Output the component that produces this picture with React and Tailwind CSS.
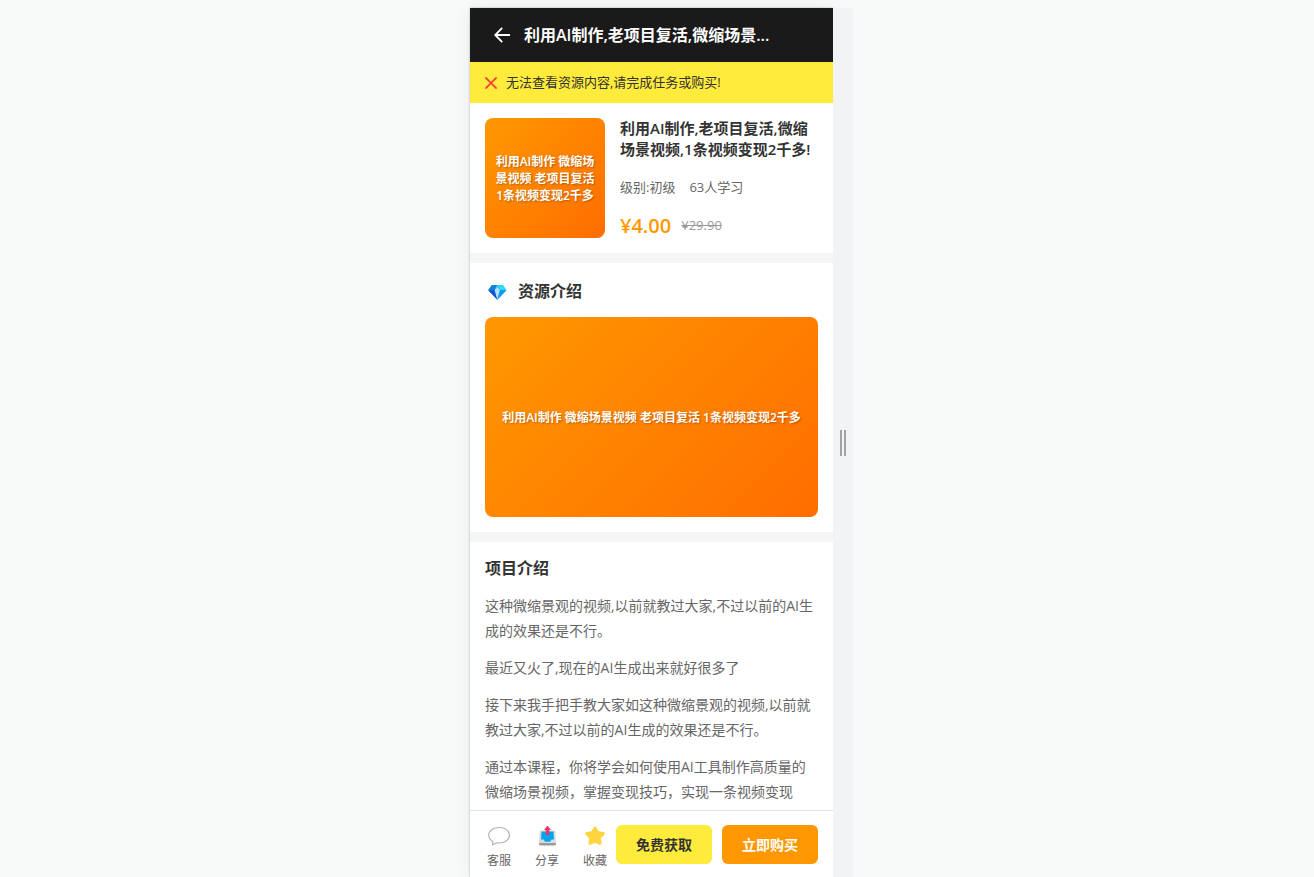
import React from 'react';

const TITLE = '利用AI制作,老项目复活,微缩场景视频,1条视频变现2千多!';
const SHORT_TITLE = '利用AI制作,老项目复活,微缩场景...';
const COVER_TEXT = '利用AI制作 微缩场景视频 老项目复活 1条视频变现2千多';

const paragraphs = [
  '这种微缩景观的视频,以前就教过大家,不过以前的AI生成的效果还是不行。',
  '最近又火了,现在的AI生成出来就好很多了',
  '接下来我手把手教大家如这种微缩景观的视频,以前就教过大家,不过以前的AI生成的效果还是不行。',
  '通过本课程，你将学会如何使用AI工具制作高质量的微缩场景视频，掌握变现技巧，实现一条视频变现',
];

const BackIcon = () => (
  <svg className="w-4 h-4" viewBox="0 0 16 16" fill="none" stroke="currentColor" strokeWidth="1.8">
    <path d="M8.2 0.8L1.2 8l7 7.2M1.4 8H16" />
  </svg>
);

const CrossIcon = () => (
  <svg className="w-3 h-3 shrink-0" viewBox="0 0 12 12" fill="none" stroke="#f44336" strokeWidth="1.8">
    <path d="M0.4 0.4l11.2 11.2M11.6 0.4L0.4 11.6" />
  </svg>
);

const DiamondIcon = () => (
  <svg className="w-6 h-5 shrink-0" viewBox="0 0 24 20">
    <path d="M6.7 3.2h11.1L21.3 8.3 12.3 17.8 3.3 8.3z" fill="#0078d4" />
    <path d="M6.7 3.2h5.6L9.3 8.3h-6z" fill="#0b84d8" />
    <path d="M12.3 3.2h5.5l3.5 5.1h-6z" fill="#26e0f7" />
    <path d="M9.3 8.3l3-5.1 3 5.1z" fill="#4cc9f5" />
    <path d="M3.3 8.3h6l3 9.5z" fill="#1453d8" />
    <path d="M15.3 8.3h6l-9 9.500z" fill="#0a9df2" />
    <path d="M9.7 8.3l2.600-3 2.600 3-2.600 9.500z" fill="#b3e0ff" />
  </svg>
);

const ChatIcon = () => (
  <svg className="w-[22px] h-[22px]" viewBox="1 1 22 22" fill="#fff" stroke="#b0b0b0" strokeWidth="1.1">
    <path d="M12.2 3.500C6.400 3.500 1.700 6.800 1.700 11.100c0 2.800 1.600 5 4.200 6.500l-.4 3.100 4-1.900c.9.150 1.800.2 2.700.2 5.800 0 10.300-3.500 10.300-7.900S18 3.500 12.200 3.500z" />
  </svg>
);

const ShareIcon = () => (
  <svg className="w-[22px] h-[22px]" viewBox="1 1 22 22">
    <path d="M4 16.500h17v3.500a1.500 1.500 0 0 1-1.500 1.500h-14A1.500 1.500 0 0 1 4 20z" fill="#9b9b9b" />
    <path d="M5.500 6.500h14a1 1 0 0 1 1 1l.5 9.500v2H4v-2l.5-9.500a1 1 0 0 1 1-1z" fill="#dcdcdc" />
    <path d="M6.500 7.500h12l.5 8h-2.500l-1.500 2.300h-5l-1.500-2.300H6z" fill="#00a6ed" />
    <path d="M12.500 2l2.900 3.700h-1.600v5h-2.600v-5H9.600z" fill="#f8315f" stroke="#f8315f" strokeWidth="0.8" strokeLinejoin="round" />
  </svg>
);

const StarIcon = () => (
  <svg className="w-[22px] h-[22px]" viewBox="1 1 22 22" fill="#fcd53f" stroke="#fcd53f" strokeWidth="3.2" strokeLinejoin="round">
    <path d="M12 4.200l2.400 4.500 5.800.9-4.100 4 .9 5.600-5-2.400-5 2.400.9-5.600-4.100-4 5.800-.9z" />
  </svg>
);

const actions = [
  { label: '客服', Icon: ChatIcon },
  { label: '分享', Icon: ShareIcon },
  { label: '收藏', Icon: StarIcon },
];

const Cover = ({ className }) => (
  <div
    className={`flex items-center justify-center rounded-lg bg-[linear-gradient(135deg,#ff9800,#ff6d00)] p-2 text-center text-xs leading-[17px] font-semibold text-white [text-shadow:1px_1px_2px_rgba(0,0,0,0.3)] ${className}`}
  >
    {COVER_TEXT}
  </div>
);

const Header = () => (
  <header className="flex h-[54px] shrink-0 items-center bg-[#1a1a1a] px-6 text-white">
    <button type="button" aria-label="返回">
      <BackIcon />
    </button>
    <h1 className="ml-3.5 text-base font-semibold whitespace-nowrap">{SHORT_TITLE}</h1>
  </header>
);

const Product = () => (
  <section className="flex gap-[15px] bg-white p-[15px]">
    <Cover className="h-[120px] w-[120px] shrink-0" />
    <div className="flex min-w-0 flex-1 flex-col justify-between">
      <h2 className="text-[15px] leading-[21px] font-semibold text-[#333]">{TITLE}</h2>
      <div className="flex gap-3.5 text-[13px] leading-5 text-[#666]">
        <span>级别:初级</span>
        <span>63人学习</span>
      </div>
      <div className="flex items-center gap-2.5">
        <span className="text-xl leading-6 font-semibold text-[#ff9800]">¥4.00</span>
        <del className="text-[13px] text-[#999]">¥29.90</del>
      </div>
    </div>
  </section>
);

const Footer = () => (
  <footer className="flex shrink-0 items-start justify-between border-t border-[#e0e0e0] bg-white px-[15px] pt-3.5 pb-[5px]">
    <div className="flex gap-5">
      {actions.map(({ label, Icon }) => (
        <button key={label} type="button" className="flex w-7 flex-col items-center gap-[3px] text-xs leading-[22px] text-[#666]">
          <Icon />
          {label}
        </button>
      ))}
    </div>
    <div className="flex gap-2.5">
      <button type="button" className="h-[39px] w-24 rounded-md bg-[#ffeb3b] text-sm font-bold text-[#333]">
        免费获取
      </button>
      <button type="button" className="h-[39px] w-24 rounded-md bg-[#ff9800] text-sm font-bold text-white">
        立即购买
      </button>
    </div>
  </footer>
);

export default function App() {
  return (
    <div className="flex h-screen justify-center overflow-hidden bg-[#f8faf9] pt-2 pl-[9px] font-['Open_Sans','Noto_Sans_CJK_SC',sans-serif]">
      <div className="flex w-full max-w-[363px] flex-col bg-[#f5f5f5] shadow-[0_0_2px_rgba(0,0,0,0.3),0_0_20px_rgba(0,0,0,0.06)]">
        <Header />
        <div className="flex h-[41px] shrink-0 items-center gap-[9px] bg-[#ffeb3b] px-[15px] text-[13px] text-[#333]" role="alert">
          <CrossIcon />
          <span>无法查看资源内容,请完成任务或购买!</span>
        </div>

        <main className="flex min-h-0 flex-1 flex-col gap-2.5 overflow-hidden">
          <Product />

          <section className="bg-white p-[15px]">
            <h2 className="mb-3 flex items-center gap-[9px] text-base leading-[27px] font-bold text-[#333]">
              <DiamondIcon />
              资源介绍
            </h2>
            <Cover className="h-[200px]" />
          </section>

          <section className="flex-1 bg-white p-[15px]">
            <h2 className="mb-3.5 text-base leading-[22px] font-bold text-[#333]">项目介绍</h2>
            <div className="flex flex-col gap-3 text-sm leading-[25px] text-[#666]">
              {paragraphs.map((text) => (
                <p key={text}>{text}</p>
              ))}
            </div>
          </section>
        </main>

        <Footer />
      </div>

      {/* Resize handle */}
      <div className="flex w-5 shrink-0 items-center justify-center gap-0.5 bg-[#f1f3f4]">
        <span className="h-[26px] w-0.5 bg-[#a3a3a3]" />
        <span className="h-[26px] w-0.5 bg-[#a3a3a3]" />
      </div>
    </div>
  );
}
